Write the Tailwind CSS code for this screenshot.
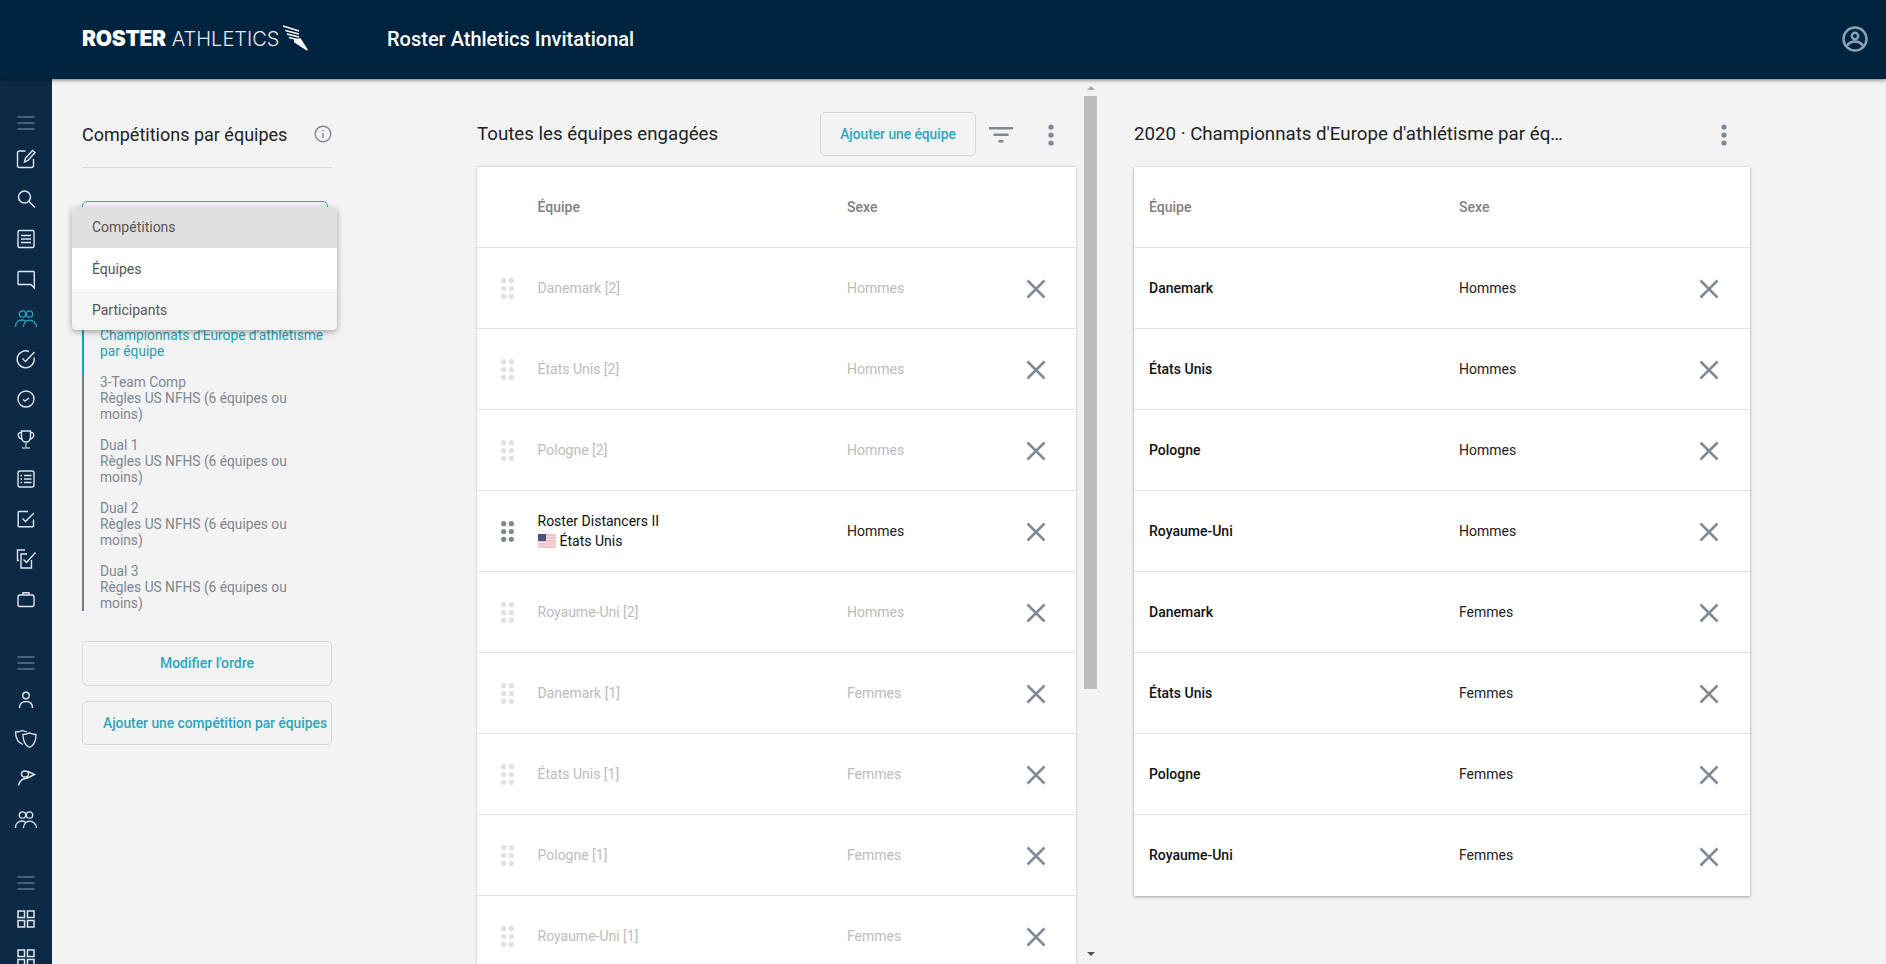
<!DOCTYPE html>
<html lang="fr">
<head>
  <meta charset="UTF-8" />
  <title>Roster Athletics</title>
  <script src="https://cdn.jsdelivr.net/npm/@tailwindcss/browser@4"></script>
</head>
<body class="bg-[#f3f3f3] text-[#222] font-[Roboto,sans-serif] h-screen overflow-hidden flex flex-col">
  <!-- Header -->
  <header class="relative z-20 h-[79px] shrink-0 bg-[#00233f] shadow-[0_1px_4px_rgba(0,0,0,0.55)] flex items-center pb-[2px] text-white">
    <div class="ml-[82px] w-[305px] flex items-center">
      <span class="font-[Inter,sans-serif] font-black text-[21px] tracking-[-0.3px] leading-none">ROSTER</span>
      <span class="ml-[6px] font-[Inter,sans-serif] font-light text-[20px] leading-none text-[#e6ebef]">ATHLETICS</span>
      <svg class="ml-[4px]" width="26" height="27" viewBox="0 0 26 27" fill="none">
        <path d="M11 14l6.600-.7L25 25l-1.400.6L11 17.300z" fill="#fff" />
        <path d="M0 1l16 5M2.300 5.500L16 9M4 9l12 3M6 12.500l9.500 2.500" stroke="#fff" stroke-width="1.400" />
      </svg>
    </div>
    <span class="text-[20px] font-medium">Roster Athletics Invitational</span>
    <svg class="ml-auto mr-[18px]" width="26" height="26" viewBox="0 0 26 26" fill="none" stroke="#8ba5b8" stroke-width="2.400">
      <circle cx="13" cy="13" r="11.500" />
      <circle cx="13" cy="10" r="3.200" />
      <path d="M5 20c2-3.500 5-4.500 8-4.500s6 1 8 4.500" />
    </svg>
  </header>

  <div class="flex-1 flex min-h-0">
    <!-- Sidebar -->
    <aside class="w-[52px] shrink-0 overflow-hidden bg-[#0c2a46] pt-[26px] flex flex-col items-center text-[#dfe6ec] [&>svg]:shrink-0">
      <svg class="mt-[6px] mb-[4px] text-[#7f9bb0]" width="24" height="24" viewBox="0 0 24 24" fill="none" stroke="currentColor"><path d="M3.500 6h17M3.500 12h17M3.500 18h17" /></svg>
      <svg class="my-[8px]" width="24" height="24" viewBox="0 0 24 24" fill="none" stroke="currentColor" stroke-width="1.400"><path d="M11.500 4H5.500a2 2 0 0 0-2 2v12.500a2 2 0 0 0 2 2h12a2 2 0 0 0 2-2V12" /><path d="M10.500 15l.8-3.500L18.500 3.500l2.500 2-7 8z" /></svg>
      <svg class="my-[8px]" width="24" height="24" viewBox="0 0 24 24" fill="none" stroke="currentColor" stroke-width="1.500"><circle cx="10.500" cy="10" r="6" /><path d="M15 14.500l6 6" /></svg>
      <svg class="my-[8px]" width="24" height="24" viewBox="0 0 24 24" fill="none" stroke="currentColor" stroke-width="1.400"><rect x="4" y="3.500" width="16" height="17" rx="1.500" /><path d="M7 8.500h10M7 12h10M7 15.500h10" /></svg>
      <svg class="my-[8px]" width="24" height="24" viewBox="0 0 24 24" fill="none" stroke="currentColor" stroke-width="1.400"><path d="M5 4.500h14.500a.8.8 0 0 1 .8.8V21l-3.500-3.500H5a1 1 0 0 1-1-1v-11a1 1 0 0 1 1-1z" /></svg>
      <svg class="my-[8px] text-[#2ba6bb]" width="24" height="24" viewBox="0 0 24 24" fill="none" stroke="currentColor" stroke-width="1.300"><circle cx="8.500" cy="7" r="3.200" /><circle cx="15.500" cy="7" r="3.200" /><path d="M1.500 20c0-4.500 3-7 6.500-7 1.500 0 2.500.5 3.500 1.300M9.500 20c0-4 3-6.800 6-6.800s7 2.500 7 6.800" /></svg>
      <svg class="my-[8px]" width="24" height="24" viewBox="0 0 24 24" fill="none" stroke="currentColor" stroke-width="1.400"><path d="M20 10.500a8.500 8.500 0 1 1-5-6" /><path d="M8.500 11.500l3 3 9-9.500" /></svg>
      <svg class="my-[8px]" width="24" height="24" viewBox="0 0 24 24" fill="none" stroke="currentColor" stroke-width="1.400"><circle cx="12" cy="12" r="8" /><path d="M9 12.500l2 1.500 4-3" /></svg>
      <svg class="my-[8px]" width="24" height="24" viewBox="0 0 24 24" fill="none" stroke="currentColor" stroke-width="1.400"><path d="M7.500 4h9v6.500a4.500 4.500 0 0 1-9 0z" /><path d="M7.500 5.500c-4-.5-5 4.500 1 7M16.500 5.500c4-.5 5 4.500-1 7" /><path d="M12 15v5.500M8 21h8" stroke="#a9b5bf" /></svg>
      <svg class="my-[8px]" width="24" height="24" viewBox="0 0 24 24" fill="none" stroke="currentColor" stroke-width="1.400"><rect x="4" y="4" width="16" height="16" rx="2" /><path d="M10 8.500h7.500M10 12h7.500M10 15.500h7.500M6.500 8.500h1.500M6.500 12h1.500M6.500 15.500h1.500" stroke-width="1.600" /></svg>
      <svg class="my-[8px]" width="24" height="24" viewBox="0 0 24 24" fill="none" stroke="currentColor" stroke-width="1.400"><path d="M19.500 12.500V19a.8.8 0 0 1-.8.8H5a.8.8 0 0 1-.8-.8V5.300a.8.8 0 0 1 .8-.8h9" /><path d="M8.500 11.500l3 3 8.500-8.500" /></svg>
      <svg class="my-[8px]" width="24" height="24" viewBox="0 0 24 24" fill="none" stroke="currentColor" stroke-width="1.400"><path d="M11 3H3.500v10.500H5" /><path d="M17.500 13v8H7V7h6" /><path d="M9.500 12.500l3 3 9-10" /></svg>
      <svg class="mt-[8px]" width="24" height="24" viewBox="0 0 24 24" fill="none" stroke="currentColor" stroke-width="1.400"><rect x="4" y="8" width="16" height="11.500" rx="2" /><path d="M9 8V5.800h6V8" /></svg>

      <svg class="mt-[40px] text-[#7f9bb0]" width="24" height="24" viewBox="0 0 24 24" fill="none" stroke="currentColor"><path d="M3.500 6h17M3.500 12h17M3.500 18h17" /></svg>
      <svg class="mt-[13px]" width="24" height="24" viewBox="0 0 24 24" fill="none" stroke="currentColor" stroke-width="1.400"><circle cx="12" cy="7.500" r="3.200" /><path d="M5.500 20c0-4.500 3-6.500 6.500-6.500s6.500 2 6.500 6.500" /></svg>
      <svg class="mt-[14px]" width="24" height="24" viewBox="0 0 24 24" fill="none" stroke="currentColor" stroke-width="1.300"><path d="M9 18.500C4.500 17 1.700 13.500 1.500 6c2.500 0 5-.5 7-1.500 1.500.7 3 1.100 4.500 1.300" /><path d="M15.500 21.500C11 19.500 9 16 9 8.500c2.500 0 4.500-.7 6.500-1.700 2 1 4 1.700 6.500 1.700 0 7.500-2 11-6.500 13z" /></svg>
      <svg class="mt-[16px]" width="24" height="24" viewBox="0 0 24 24" fill="none" stroke="currentColor" stroke-width="1.400"><ellipse cx="11" cy="8" rx="3.500" ry="3" /><path d="M14 5.500l6.500 3-6 3c-3 1.500-8 0-10 8" /></svg>
      <svg class="mt-[18px]" width="24" height="24" viewBox="0 0 24 24" fill="none" stroke="currentColor" stroke-width="1.300"><circle cx="8.500" cy="7" r="3.200" /><circle cx="15.500" cy="7" r="3.200" /><path d="M1.500 20c0-4.500 3-7 6.500-7 1.500 0 2.500.5 3.500 1.300M9.500 20c0-4 3-6.800 6-6.800s7 2.500 7 6.800" /></svg>

      <svg class="mt-[39px] text-[#7f9bb0]" width="24" height="24" viewBox="0 0 24 24" fill="none" stroke="currentColor"><path d="M3.500 6h17M3.500 12h17M3.500 18h17" /></svg>
      <svg class="mt-[12px]" width="24" height="24" viewBox="0 0 24 24" fill="none" stroke="currentColor" stroke-width="1.500"><rect x="4" y="4" width="6.500" height="6.500" /><rect x="13.500" y="4" width="6.500" height="6.500" /><rect x="4" y="13.500" width="6.500" height="6.500" /><rect x="13.500" y="13.500" width="6.500" height="6.500" /></svg>
      <svg class="mt-[15px]" width="24" height="24" viewBox="0 0 24 24" fill="none" stroke="currentColor" stroke-width="1.500"><rect x="4" y="4" width="6.500" height="6.500" /><rect x="13.500" y="4" width="6.500" height="6.500" /><rect x="4" y="13.500" width="6.500" height="6.500" /><rect x="13.500" y="13.500" width="6.500" height="6.500" /></svg>
    </aside>

    <!-- Main Content -->
    <main class="flex-1 flex min-w-0 overflow-hidden">
      <!-- Team competitions -->
      <section class="ml-[30px] w-[250px] shrink-0 pt-[33px]">
        <div class="h-[44px] flex items-center justify-between mb-[11px]">
          <h2 class="text-[18px] text-[#222]">Compétitions par équipes</h2>
          <svg width="18" height="18" viewBox="0 0 18 18" fill="none" stroke="#7d8894" stroke-width="1.400"><circle cx="9" cy="9" r="7.800" /><path d="M9 8v5M9 5v1.500" /></svg>
        </div>
        <div class="border-b border-[#d9d9d9]"></div>
        <div class="relative mt-[33px] w-[246px] h-[44px] border border-[#2ba6bb] rounded-[5px]">
          <div class="absolute z-10 top-[5px] left-[-11px] w-[265px] rounded-[5px] overflow-hidden bg-white text-[14px] text-[#555] shadow-[0_2px_6px_rgba(0,0,0,0.35)]">
            <div class="h-[41px] pl-[20px] flex items-center bg-[#e0e0e0]">Compétitions</div>
            <div class="h-[41px] pl-[20px] pt-[1px] flex items-center bg-white">Équipes</div>
            <div class="h-[41px] pl-[20px] pt-[1px] flex items-center bg-[#f5f5f5]">Participants</div>
          </div>
        </div>
        <ul class="mt-[66px] text-[13.75px] leading-[16px] text-[#7c8791]">
          <li class="pl-[16px] pb-[15px] border-l-2 border-[#15a5b5] text-[#1f9fb3]">2020<br />Championnats d'Europe d'athlétisme<br />par équipe</li>
          <li class="pl-[16px] pb-[15px] border-l-2 border-[#6f7e8c]">3-Team Comp<br />Règles US NFHS (6 équipes ou<br />moins)</li>
          <li class="pl-[16px] pb-[15px] border-l-2 border-[#6f7e8c]">Dual 1<br />Règles US NFHS (6 équipes ou<br />moins)</li>
          <li class="pl-[16px] pb-[15px] border-l-2 border-[#6f7e8c]">Dual 2<br />Règles US NFHS (6 équipes ou<br />moins)</li>
          <li class="pl-[16px] border-l-2 border-[#6f7e8c]">Dual 3<br />Règles US NFHS (6 équipes ou<br />moins)</li>
        </ul>
        <button class="mt-[30px] w-full h-[45px] border border-[#d6d6d6] rounded-[5px] text-[14px] font-medium text-[#2ba6bb]">Modifier l'ordre</button>
        <button class="mt-[15px] w-full h-[44px] border border-[#d6d6d6] rounded-[5px] text-[13.8px] font-medium text-[#2ba6bb] pl-[20px] text-left whitespace-nowrap">Ajouter une compétition par équipes</button>
      </section>

      <!-- All registered teams -->
      <section class="ml-[145px] w-[599px] shrink-0 pt-[33px]">
        <div class="h-[44px] mb-[11px] flex items-center">
          <h2 class="text-[18.7px] text-[#222] w-[343px] whitespace-nowrap">Toutes les équipes engagées</h2>
          <button class="w-[156px] h-[44px] border border-[#d6d6d6] rounded-[5px] text-[13.75px] font-medium text-[#2ba6bb]">Ajouter une équipe</button>
          <svg class="ml-[13px] mt-[1px]" width="24" height="16" viewBox="0 0 24 16" fill="#7d8894"><rect width="24" height="2.500" /><rect x="4.500" y="6.500" width="15" height="2.500" /><rect x="9.500" y="13" width="5" height="2.500" /></svg>
          <svg class="ml-[35px] mt-[1px]" width="6" height="24" viewBox="0 0 6 24" fill="#7d8894"><circle cx="3" cy="4" r="2.600" /><circle cx="3" cy="12" r="2.600" /><circle cx="3" cy="20" r="2.600" /></svg>
        </div>
        <div id="allTeams" class="bg-white shadow-[0_0_3px_rgba(0,0,0,0.2)]"></div>
      </section>

      <!-- Scrollbar -->
      <div class="ml-[8px] w-[13px] shrink-0 flex flex-col items-center">
        <div class="h-[17px] flex items-center justify-center pt-[1px]">
          <div class="border-x-[4px] border-x-transparent border-b-[4px] border-b-[#a8a8a8]"></div>
        </div>
        <div class="w-[13px] h-[593px] bg-[#bdbdbd]"></div>
        <div class="mt-auto h-[12px] flex items-start justify-center">
          <div class="border-x-[4px] border-x-transparent border-t-[4px] border-t-[#555]"></div>
        </div>
      </div>

      <!-- Selected competition -->
      <section class="ml-[37px] w-[616px] shrink-0 pt-[33px]">
        <div class="h-[44px] mb-[11px] flex items-center">
          <h2 class="text-[18.7px] text-[#222] w-[430px] truncate">2020 · Championnats d'Europe d'athlétisme par équipe</h2>
          <svg class="ml-[157px] mt-[1px]" width="6" height="24" viewBox="0 0 6 24" fill="#7d8894"><circle cx="3" cy="4" r="2.600" /><circle cx="3" cy="12" r="2.600" /><circle cx="3" cy="20" r="2.600" /></svg>
        </div>
        <div id="selectedTeams" class="bg-white shadow-[0_1px_3px_rgba(0,0,0,0.35)]"></div>
      </section>
    </main>
  </div>

  <script>
    const allTeams = [
      { name: "Danemark [2]", sex: "Hommes" },
      { name: "États Unis [2]", sex: "Hommes" },
      { name: "Pologne [2]", sex: "Hommes" },
      { name: "Roster Distancers II", sex: "Hommes", active: true },
      { name: "Royaume-Uni [2]", sex: "Hommes" },
      { name: "Danemark [1]", sex: "Femmes" },
      { name: "États Unis [1]", sex: "Femmes" },
      { name: "Pologne [1]", sex: "Femmes" },
      { name: "Royaume-Uni [1]", sex: "Femmes" },
    ];
    const selectedTeams = [
      ["Danemark", "Hommes"], ["États Unis", "Hommes"], ["Pologne", "Hommes"], ["Royaume-Uni", "Hommes"],
      ["Danemark", "Femmes"], ["États Unis", "Femmes"], ["Pologne", "Femmes"], ["Royaume-Uni", "Femmes"],
    ];

    const closeIcon = `<svg width="22" height="22" viewBox="0 0 22 22" fill="none" stroke="#7f8a95" stroke-width="2.500"><path d="M2.500 2.500l17 17M19.500 2.500l-17 17" /></svg>`;

    function dots(color) {
      return `<svg width="13" height="21" viewBox="0 0 13 21" fill="${color}">
        <circle cx="2.700" cy="2.700" r="2.600" /><circle cx="10.300" cy="2.700" r="2.600" />
        <circle cx="2.700" cy="10.500" r="2.600" /><circle cx="10.300" cy="10.500" r="2.600" />
        <circle cx="2.700" cy="18.300" r="2.600" /><circle cx="10.300" cy="18.300" r="2.600" />
      </svg>`;
    }

    const flag = `<svg class="mr-[4px] opacity-90" width="18" height="14" viewBox="0 0 18 14">
      <rect width="18" height="14" fill="#f7d9dc" /><path d="M0 1h18M0 4h18M0 7h18M0 10h18M0 13h18" stroke="#e9a3aa" stroke-width="1" />
      <rect width="8" height="7" fill="#39406f" />
    </svg>`;

    document.getElementById("allTeams").innerHTML =
      `<div class="h-[81px] flex items-center border-b border-[#e2e2e2] text-[14px] font-medium text-[#808080]">
        <span class="ml-[60.5px] w-[309.5px]">Équipe</span><span>Sexe</span>
      </div>` +
      allTeams.map((team) => `
        <div class="h-[81px] flex items-center border-b border-[#e2e2e2] text-[14px]">
          <span class="ml-[24px] mr-[23.5px]">${dots(team.active ? "#7d8894" : "#dde0e4")}</span>
          ${team.active
            ? `<div class="w-[309.5px] leading-[20px] text-[#111]"><div>${team.name}</div><div class="flex items-center">${flag}États Unis</div></div>`
            : `<div class="w-[309.5px] text-[#bcbcbc]">${team.name}</div>`}
          <div class="${team.active ? "text-[#222]" : "text-[#bcbcbc]"}">${team.sex}</div>
          <span class="ml-auto mr-[29px] mt-[2px]">${closeIcon}</span>
        </div>`).join("");

    document.getElementById("selectedTeams").innerHTML =
      `<div class="h-[81px] flex items-center border-b border-[#e2e2e2] text-[14px] font-medium text-[#808080]">
        <span class="ml-[15px] w-[310px]">Équipe</span><span>Sexe</span>
      </div>` +
      selectedTeams.map(([name, sex], i) => `
        <div class="h-[81px] flex items-center ${i < 7 ? "border-b border-[#e2e2e2]" : ""} text-[14px]">
          <div class="ml-[15px] w-[310px] font-medium text-[#111]">${name}</div>
          <div class="text-[#222]">${sex}</div>
          <span class="ml-auto mr-[30px] mt-[2px]">${closeIcon}</span>
        </div>`).join("");
  </script>
</body>
</html>
